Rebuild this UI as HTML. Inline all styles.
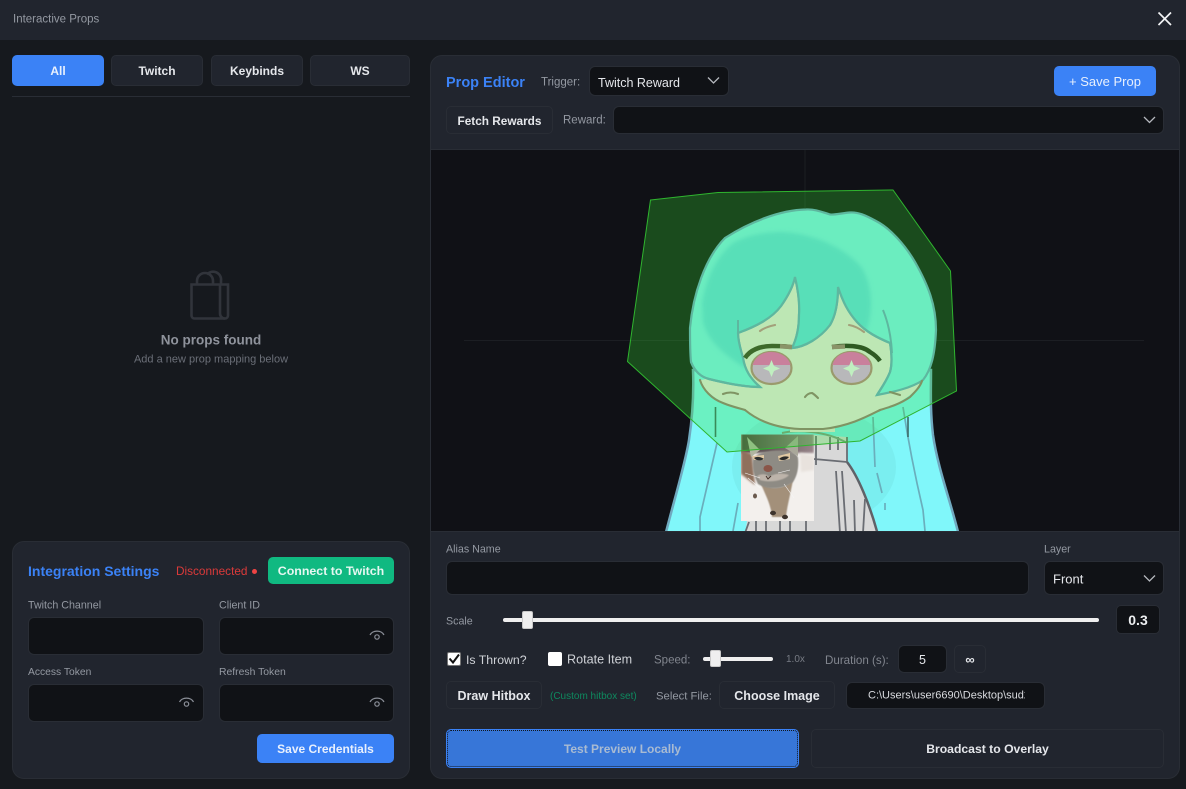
<!DOCTYPE html>
<html><head><meta charset="utf-8"><title>Interactive Props</title>
<style>
*{box-sizing:border-box}
html,body{margin:0;padding:0;width:1186px;height:789px;overflow:hidden;background:#16191e;font-family:"Liberation Sans",sans-serif}
.a{position:absolute}
.t{position:absolute;white-space:nowrap;transform:translateY(-50%);line-height:1;margin-top:1px}
.c{position:absolute;display:flex;align-items:center;justify-content:center;white-space:nowrap}
.inp{position:absolute;background:#101216;border:1px solid #292d35;border-radius:6px}
.btn{position:absolute;display:flex;align-items:center;justify-content:center;background:#21252e;border:1px solid #292d35;border-radius:5px;color:#e5e7eb;font-weight:700;font-size:12px;white-space:nowrap;padding-top:1px}
.lbl{color:#9499a2;font-size:10.7px}
.blue{background:#3b82f6;border-color:#3b82f6;color:#e8f0fd}
svg{position:absolute;overflow:visible}
</style></head><body>

<div class="a" style="left:0;top:0;width:1186px;height:40px;background:#21252e"></div>
<div class="t" style="left:13px;top:18.500px;font-size:11.5px;color:#9499a2">Interactive Props</div>
<svg style="left:0;top:0" width="1186" height="40"><path d="M1158.500 12.500L1171 25M1171 12.500L1158.500 25" stroke="#f2f3f5" stroke-width="1.700" fill="none"/></svg>

<div class="btn blue" style="left:12px;top:55px;width:92px;height:31px">All</div>
<div class="btn" style="left:111px;top:55px;width:92px;height:31px">Twitch</div>
<div class="btn" style="left:211px;top:55px;width:92px;height:31px">Keybinds</div>
<div class="btn" style="left:310px;top:55px;width:100px;height:31px">WS</div>
<div class="a" style="left:12px;top:96px;width:398px;height:1px;background:#292d35"></div>

<svg style="left:0;top:0" width="430" height="340"><g fill="none" stroke="#31343b" stroke-width="2.600"><path d="M191.500 284.500H228v31a3 3 0 0 1-3 3H194.500a3 3 0 0 1-3-3z"/><path d="M220 284.500v29a5 5 0 0 0 5 5"/><path d="M197 284v-3a8 8 0 0 1 16 0v3"/><path d="M207 274.500a8 8 0 0 1 14 6.500v3"/></g></svg>
<div class="t" style="left:0;width:422px;text-align:center;top:339px;font-size:13.500px;font-weight:700;color:#8f939c">No props found</div>
<div class="t" style="left:0;width:422px;text-align:center;top:359px;font-size:11px;color:#6b6f78">Add a new prop mapping below</div>

<div class="a" style="left:12px;top:541px;width:398px;height:238px;background:#21252e;border:1px solid #292d35;border-radius:12px"></div>
<div class="t" style="left:28px;top:569.500px;font-size:14px;font-weight:700;color:#3b82f6">Integration Settings</div>
<div class="t" style="left:176px;top:570.500px;font-size:11.800px;color:#dc3a3a">Disconnected</div>
<div class="a" style="left:251.500px;top:568.500px;width:5px;height:5px;border-radius:50%;background:#ef4444"></div>
<div class="btn" style="left:268px;top:557px;width:126px;height:27px;background:#10b981;border-color:#10b981;color:#e6f7f1;font-size:12.400px">Connect to Twitch</div>
<div class="t lbl" style="left:28px;top:605px">Twitch Channel</div>
<div class="t lbl" style="left:219px;top:605px">Client ID</div>
<div class="inp" style="left:28px;top:617px;width:176px;height:38px"></div>
<div class="inp" style="left:219px;top:617px;width:175px;height:38px"></div>
<div class="t lbl" style="left:28px;top:672px;font-size:10.300px">Access Token</div>
<div class="t lbl" style="left:219px;top:672px;font-size:10.400px">Refresh Token</div>
<div class="inp" style="left:28px;top:684px;width:176px;height:38px"></div>
<div class="inp" style="left:219px;top:684px;width:175px;height:38px"></div>
<svg style="left:0;top:0" width="430" height="789"><g fill="none" stroke="#8b8f98" stroke-width="1.200"><path d="M370 635a7.500 6 0 0 1 14 0"/><circle cx="377" cy="637" r="2.200"/><path d="M370 702a7.500 6 0 0 1 14 0"/><circle cx="377" cy="704" r="2.200"/><path d="M179.500 702a7.500 6 0 0 1 14 0"/><circle cx="186.500" cy="704" r="2.200"/></g></svg>
<div class="btn blue" style="left:257px;top:734px;width:137px;height:29px">Save Credentials</div>

<div class="a" style="left:430px;top:55px;width:750px;height:724px;background:#21252e;border:1px solid #292d35;border-radius:12px"></div>
<div class="t" style="left:446px;top:81.500px;font-size:14.500px;font-weight:700;color:#3b82f6">Prop Editor</div>
<div class="t lbl" style="left:541px;top:81.500px;font-size:11.500px">Trigger:</div>
<div class="inp" style="left:589px;top:66px;width:140px;height:30px"></div>
<div class="t" style="left:598px;top:82px;font-size:12.500px;color:#e5e7eb">Twitch Reward</div>
<div class="btn blue" style="left:1054px;top:66px;width:102px;height:30px;font-weight:400;font-size:13px">+ Save Prop</div>
<div class="btn" style="left:446px;top:106px;width:107px;height:28px;font-size:11.800px">Fetch Rewards</div>
<div class="t lbl" style="left:563px;top:120px;font-size:11.500px">Reward:</div>
<div class="inp" style="left:613px;top:106px;width:551px;height:28px"></div>

<svg style="left:0;top:0" width="1186" height="789"><g fill="none" stroke="#b5b8be" stroke-width="1.300"><path d="M708 77.500l5.500 5.500 5.500-5.500"/><path d="M1144 117l5.500 5.500 5.500-5.500"/></g></svg>

<svg style="left:431px;top:150px;overflow:hidden" width="748" height="381" viewBox="431 150 748 381">
<defs><clipPath id="cat"><rect x="741" y="434.500" width="73" height="86.500"/></clipPath>
<clipPath id="hairclip"><path d="M691 362C695 372 701 377 709 379C725 383 745 387 760 387C750 378 745 370 743 358C741 350 738 342 738 333C757 326 772 318 781 306C788 296 793 287 795 277C798 290 800 302 799 315C799 328 797 338 792 348C805 347 820 338 830 325C836 315 838 302 838 287C843 302 848 312 857 322C866 332 878 338 890 343C892 355 892 365 890 372C886 382 880 390 877 395C893 392 912 388 923 380C931 370 935 355 936 330C936 305 928 285 915 262C905 245 890 228 876 221C865 215 858 212 850 212.500C842 213 836 215 830 214.500C822 212 815 209 806 209.500C780 210 750 222 725 238C705 258 693 295 690 328C690 340 690 352 691 362Z"/></clipPath>
<linearGradient id="band" x1="0" x2="1" y1="0" y2="0"><stop offset="0" stop-color="#4b4040"/><stop offset="1" stop-color="#98858a"/></linearGradient>
<filter id="b1"><feGaussianBlur stdDeviation="1"/></filter>
<filter id="b3"><feGaussianBlur stdDeviation="2"/></filter>
<filter id="b2"><feGaussianBlur stdDeviation="0.500"/></filter>
<filter id="b4"><feGaussianBlur stdDeviation="0.350"/></filter></defs>
<rect x="431" y="150" width="748" height="381" fill="#101116"/>
<path d="M805 150V531M464 340.500H1144" stroke="#1c1e23" stroke-width="1"/>

<g filter="url(#b4)">
<!-- back hair -->
<path d="M693 370C694 395 692 420 689 440C685 465 674 500 664 540H960C952 505 938 470 933 435C930 410 931 390 931 370Z" fill="#80f7fa" stroke="#6fa9bf" stroke-width="2.500"/>
<ellipse cx="814" cy="467" rx="82" ry="60" fill="#7aeef0"/>
<!-- sweater -->
<path d="M745 535L750 500L741 435H815L847 437L847 462C858 476 870 505 878 535Z" fill="#d8d8d8"/>
<path d="M847 462C858 476 870 505 878 535" fill="none" stroke="#606268" stroke-width="2.500"/>
<path d="M814 459L847 462M847 437V462M816 436V465M830 437V450M838 437V450M836 471L840 533M842 471L846 533M865 499L863 533M854 500L855 533M749 522L745 533M756 520V533M766 520V533M780 520V533M790 520V533M806 520V533" stroke="#6b6d73" stroke-width="1.800" fill="none"/>
<!-- hair strands -->
<path d="M717 443C712 465 705 495 700 517L700 531M738 503L733 531M873 417L875 467M903 407C908 440 916 480 923 510L925 531M877 473L882 493M885 503V510" stroke="#6aaebc" stroke-width="1.700" fill="none"/>
<path d="M908 417V437M715.500 407V437" stroke="#3a6a68" stroke-width="1.600"/>
<!-- collar -->
<path d="M782 433C795 430 825 430 847 443" fill="none" stroke="#7f9a86" stroke-width="2"/>
<!-- neck/face -->
<path d="M790 420H835V432H790Z" fill="#eee5dd"/>
<path d="M700 380C708 380 715 374 725 360L738 280H880L895 360C903 372 912 380 922 380C918 392 900 404 880 410C868 416 850 425 823 429H800C775 428 757 418 745 410C725 405 705 395 700 380Z" fill="#f1e9e6"/>
<!-- front hair -->
<path d="M691 362C695 372 701 377 709 379C725 383 745 387 760 387C750 378 745 370 743 358C741 350 738 342 738 333C757 326 772 318 781 306C788 296 793 287 795 277C798 290 800 302 799 315C799 328 797 338 792 348C805 347 820 338 830 325C836 315 838 302 838 287C843 302 848 312 857 322C866 332 878 338 890 343C892 355 892 365 890 372C886 382 880 390 877 395C893 392 912 388 923 380C931 370 935 355 936 330C936 305 928 285 915 262C905 245 890 228 876 221C865 215 858 212 850 212.500C842 213 836 215 830 214.500C822 212 815 209 806 209.500C780 210 750 222 725 238C705 258 693 295 690 328C690 340 690 352 691 362Z" fill="#80f1f6" stroke="#6ea7c9" stroke-width="2.200"/>
<g clip-path="url(#hairclip)"><path d="M702 303C706 280 715 258 733 243C750 234 768 232 783 232C815 234 845 248 862 268C872 285 874 310 866 332L820 360L745 368C725 355 708 342 703 322Z" fill="#66deec" filter="url(#b3)"/></g>
<path d="M691 362C695 372 701 377 709 379C725 383 745 387 760 387C750 378 745 370 743 358C741 350 738 342 738 333C757 326 772 318 781 306C788 296 793 287 795 277C798 290 800 302 799 315C799 328 797 338 792 348C805 347 820 338 830 325C836 315 838 302 838 287C843 302 848 312 857 322C866 332 878 338 890 343C892 355 892 365 890 372C886 382 880 390 877 395" fill="none" stroke="#6ea7c9" stroke-width="2.200"/>
<path d="M738 333V320M883 310C888 322 891 335 892 353" stroke="#6ea7c9" stroke-width="2" fill="none"/>
</g>
<!-- cat -->
<g clip-path="url(#cat)">
<rect x="741" y="434" width="73" height="88" fill="#f3f0ed"/>
<rect x="741" y="433" width="73" height="20" fill="url(#band)" filter="url(#b1)"/>
<path d="M741 450L752 454L755 485L741 474Z" fill="#8f705c" filter="url(#b1)"/>
<path d="M800 453L814 456V470L801 472Z" fill="#e8e2dd" filter="url(#b1)"/>
<path d="M760 482C768 490 784 490 793 480C790 496 787 507 786 517H772C771 505 766 496 760 482Z" fill="#a3907a" filter="url(#b2)"/>
<path d="M753 460C755 449 796 447 798 458C799 468 797 476 793 482C782 490 768 490 758 484C755 478 752 470 753 460Z" fill="#8e8b84" filter="url(#b2)"/>
<path d="M747 437L760 450L751 457Z" fill="#b0b5a0"/><path d="M798 436L785 448L798 456Z" fill="#aaa89a"/>
<path d="M757 476C762 473 767 474 769 477C775 473 783 473 789 475C784 481 768 483 760 480Z" fill="#bdb4aa" filter="url(#b2)"/>
<ellipse cx="768" cy="468.500" rx="4.500" ry="3.500" fill="#8a5548"/>
<path d="M752 456L764 455L764 460L754 460Z" fill="#e0c8a2"/><path d="M778 456L790 453L790 459L779 461Z" fill="#e0c8a2"/>
<path d="M754 458C757 456 761 457 764 459C760 461 757 461 754 458Z" fill="#2c3030"/>
<path d="M779 459C782 456 786 456 789 457C787 460 782 461 779 459Z" fill="#2a2a28"/>
<path d="M745 473L760 478M748 478L760 488M790 470L778 473M784 484L794 498" stroke="#f6f6f6" stroke-width=".600" fill="none"/>
<path d="M766 476L768 479L771 476" stroke="#403028" stroke-width="1" fill="none"/>
<ellipse cx="755" cy="496" rx="2" ry="2.500" fill="#6a5a4e"/>
<ellipse cx="773" cy="513" rx="3" ry="2.200" fill="#3c332c"/>
<ellipse cx="785" cy="517" rx="3" ry="2.200" fill="#3c332c"/>
</g>
<!-- hitbox -->
<polygon points="650.500,200 718,192.500 893,190 950.500,271 956.500,391 860,441 727,452 627.500,361.500" fill="rgba(55,228,51,.28)" stroke="#2fb52f" stroke-width="1"/>
<!-- face details -->
<g filter="url(#b4)">
<g fill="none" stroke="#7f9464" stroke-width="2.100" stroke-linecap="round">
<path d="M700 380C703 390 712 399 723 403C730 406 738 408 745 410"/>
<path d="M745 410C757 420 775 428 800 429H823C850 426 868 416 880 410"/>
<path d="M880 410C890 407 900 404 910 397C915 392 920 387 922 381"/>
<path d="M723 394C728 392 733 392 738 394M890 392L900 395"/>
<path d="M805 397C808 393 811 393 812 393C814 394 816 396 818 398"/>
<path d="M760 331C764 328 770 326 775 325M849 325C855 326 860 329 864 332" stroke="#a3a07a"/>
</g>
<ellipse cx="771.500" cy="368" rx="20" ry="16" fill="#b8b8ba" stroke="#9a9a6c" stroke-width="2.200"/>
<path d="M752.500 365C755 357 762 352 771 352C781 352 789 358 790.500 365Z" fill="#c9809c"/>
<path d="M771.500 360L774 366L780 368.500L774 371L771.500 377L769 371L763 368.500L769 366Z" fill="#c0efc0"/>
<ellipse cx="851.500" cy="368" rx="20" ry="16" fill="#b8b8ba" stroke="#9a9a6c" stroke-width="2.200"/>
<path d="M832.500 365C834 357 842 352 851 352C861 352 869 358 870.500 365Z" fill="#c9809c"/>
<path d="M851.500 360L854 366L860 368.500L854 371L851.500 377L849 371L843 368.500L849 366Z" fill="#c0efc0"/>
<path d="M745 358C750 350 760 346 772 346C778 346 785 346 790 347" fill="none" stroke="#3d6a2c" stroke-width="4.500"/>
<path d="M780 346.300L792 347" fill="none" stroke="#8a9468" stroke-width="4.500"/>
<path d="M832 347C845 345 862 345 870 352C875 355 878 358 880 361" fill="none" stroke="#2f5a24" stroke-width="4.500"/>
<path d="M832 347L845 346.500" fill="none" stroke="#8a9468" stroke-width="4.500"/>
</g>
</svg>
<div class="a" style="left:431px;top:149px;width:748px;height:1px;background:#292d35"></div>
<div class="a" style="left:431px;top:531px;width:748px;height:1px;background:#292d35"></div>

<div class="t lbl" style="left:446px;top:549px">Alias Name</div>
<div class="inp" style="left:446px;top:561px;width:583px;height:34px"></div>
<div class="t lbl" style="left:1044px;top:549px">Layer</div>
<div class="inp" style="left:1044px;top:561px;width:120px;height:34px"></div>
<div class="t" style="left:1053px;top:578px;font-size:13px;color:#e5e7eb">Front</div>
<svg style="left:0;top:0" width="1186" height="789"><path d="M1144 575.500l5.500 5.500 5.500-5.500" fill="none" stroke="#b5b8be" stroke-width="1.300"/></svg>

<div class="t lbl" style="left:446px;top:620.500px">Scale</div>
<div class="a" style="left:503px;top:618px;width:596px;height:4px;background:#efefef;border-radius:2px"></div>
<div class="a" style="left:522px;top:611px;width:11px;height:18px;background:#efefef;border:1px solid #c9c9c9;border-radius:2px"></div>
<div class="c" style="left:1116px;top:605px;width:44px;height:29px;background:#101216;border:1px solid #292d35;border-radius:5px;color:#eceef0;font-weight:700;font-size:14px">0.3</div>

<div class="a" style="left:447px;top:652px;width:14px;height:14px;background:#fff;border:1px solid #777;border-radius:2px"></div>
<svg style="left:0;top:0" width="500" height="700"><path d="M449.500 658.500l3.500 4 6-8" fill="none" stroke="#111" stroke-width="2"/></svg>
<div class="t" style="left:466px;top:659px;font-size:12.300px;color:#cfd2d7">Is Thrown?</div>
<div class="a" style="left:548px;top:652px;width:14px;height:14px;background:#fff;border-radius:2px"></div>
<div class="t" style="left:567px;top:659px;font-size:12.600px;color:#cfd2d7">Rotate Item</div>
<div class="t lbl" style="left:654px;top:659.500px;font-size:11.500px;color:#82868f">Speed:</div>
<div class="a" style="left:703px;top:657px;width:70px;height:4px;background:#efefef;border-radius:2px"></div>
<div class="a" style="left:710px;top:650px;width:11px;height:17px;background:#efefef;border:1px solid #c9c9c9;border-radius:2px"></div>
<div class="t" style="left:786px;top:659px;font-size:10px;color:#777b84">1.0x</div>
<div class="t lbl" style="left:825px;top:659.500px;font-size:11.600px;color:#82868f">Duration (s):</div>
<div class="c inp" style="left:898px;top:645px;width:49px;height:28px;color:#e5e7eb;font-size:12.500px;padding-top:1px">5</div>
<div class="btn" style="left:954px;top:645px;width:32px;height:28px;font-size:13px">∞</div>

<div class="btn" style="left:446px;top:681px;width:96px;height:28px;font-size:12.500px">Draw Hitbox</div>
<div class="t" style="left:550px;top:695.500px;font-size:10px;color:#0e8a5f">(Custom hitbox set)</div>
<div class="t lbl" style="left:656px;top:695.500px;font-size:11.300px">Select File:</div>
<div class="btn" style="left:719px;top:681px;width:116px;height:28px;font-size:12.500px">Choose Image</div>
<div class="inp" style="left:846px;top:682px;width:199px;height:27px"></div>
<div class="t" style="left:868px;top:695px;width:157px;overflow:hidden;font-size:11px;color:#d8dade">C:\Users\user6690\Desktop\sud2.png</div>

<div class="btn" style="left:446px;top:729px;width:353px;height:39px;background:#3776d8;border-color:#3b82f6;color:#a9bbd2;outline:1px dotted #10151d;outline-offset:-2px">Test Preview Locally</div>
<div class="btn" style="left:811px;top:729px;width:353px;height:39px;font-size:12.200px">Broadcast to Overlay</div>

</body></html>
